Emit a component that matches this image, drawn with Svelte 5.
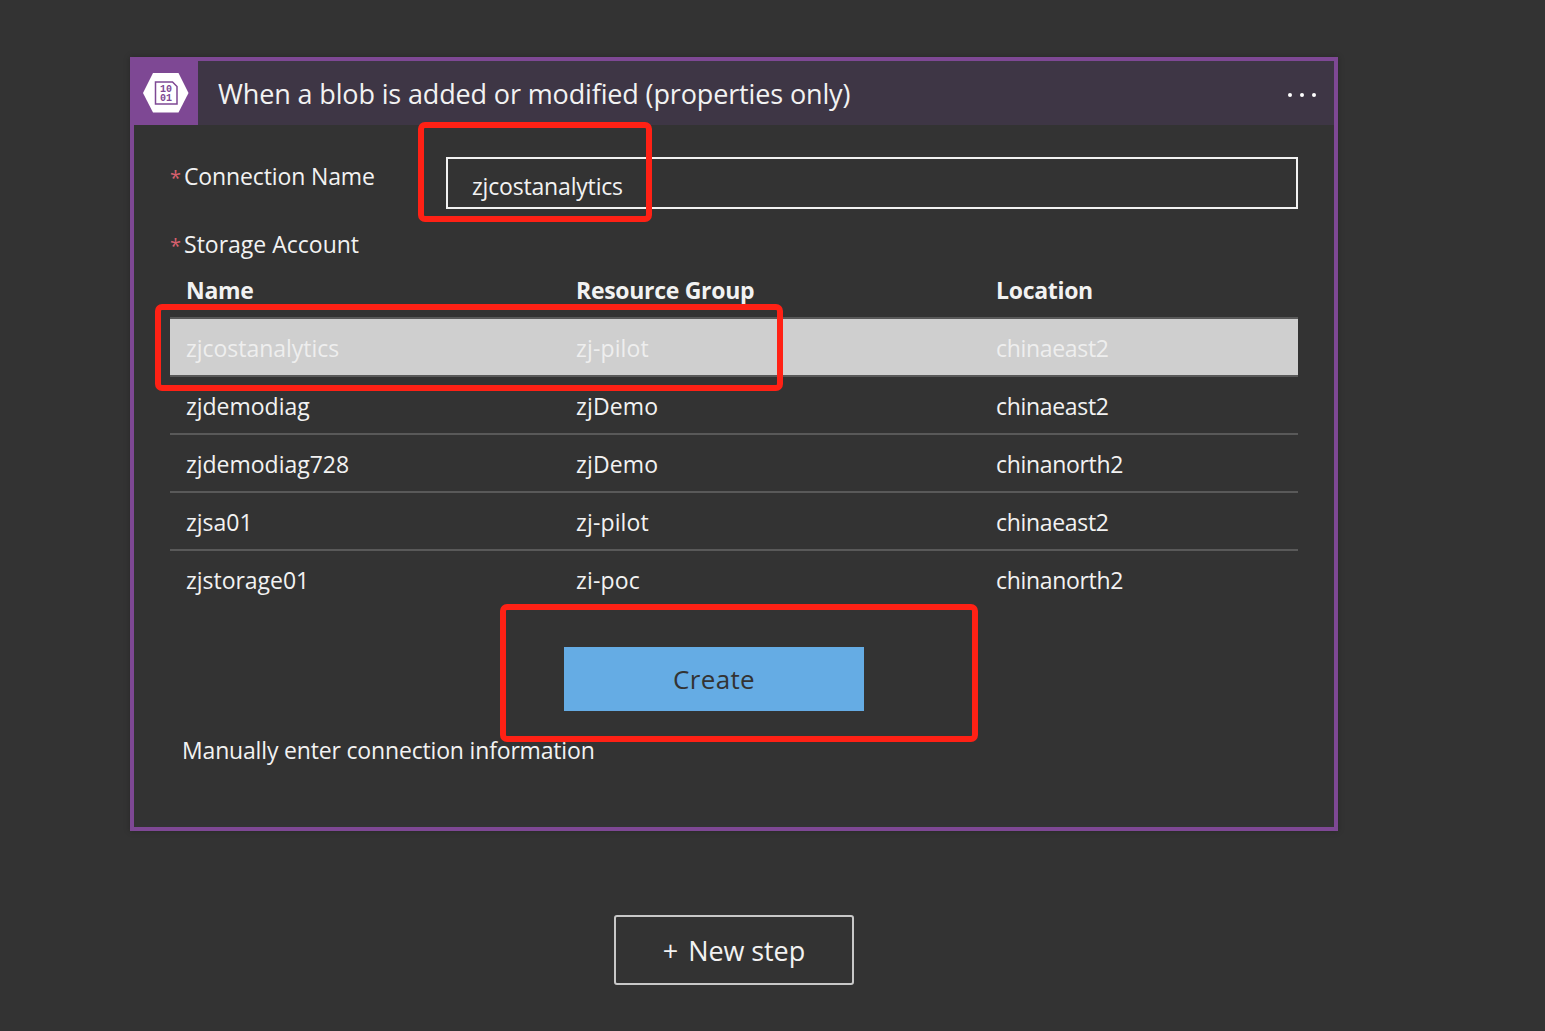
<script>
  const accounts = [
    { name: 'zjcostanalytics', group: 'zj-pilot', location: 'chinaeast2', selected: true },
    { name: 'zjdemodiag', group: 'zjDemo', location: 'chinaeast2' },
    { name: 'zjdemodiag728', group: 'zjDemo', location: 'chinanorth2' },
    { name: 'zjsa01', group: 'zj-pilot', location: 'chinaeast2' },
    { name: 'zjstorage01', group: 'zi-poc', location: 'chinanorth2' }
  ];
</script>

<div class="page">
  <div class="card">
    <div class="card-header">
      <div class="icon-box">
        <svg width="46" height="40" viewBox="0 0 46 40">
          <path d="M10 0h25.500L45.500 20 35.500 39.500H10L0 20z" fill="#fff" />
          <path d="M12.500 9h17l4.500 4.500V31H12.500z" fill="none" stroke="#7e4894" stroke-width="1.500" />
          <text x="23" y="19" class="bits">10</text>
          <text x="23" y="28" class="bits">01</text>
        </svg>
      </div>
      <div class="title">When a blob is added or modified (properties only)</div>
      <div class="dots"><span></span><span></span><span></span></div>
    </div>

    <div class="card-body">
      <div class="connection-row">
        <div class="label connection-label"><span class="star">*</span>Connection Name</div>
        <div class="input">zjcostanalytics</div>
      </div>

      <div class="label account-label"><span class="star">*</span>Storage Account</div>

      <div class="table">
        <div class="row head">
          <div>Name</div>
          <div>Resource Group</div>
          <div>Location</div>
        </div>
        {#each accounts as a}
          <div class="row" class:selected={a.selected}>
            <div class="col-name">{a.name}</div>
            <div class="col-group">{a.group}</div>
            <div class="col-location">{a.location}</div>
          </div>
        {/each}
      </div>

      <button class="create">Create</button>
      <div class="manual">Manually enter connection information</div>
    </div>
  </div>

  <button class="new-step"><span class="plus">+</span> New step</button>

  <!-- red annotations drawn over the screenshot -->
  <div class="mark mark-input"></div>
  <div class="mark mark-row"></div>
  <div class="mark mark-create"></div>
</div>

<style>
  :global(body) {
    margin: 0;
    background: #333333;
  }

  .page {
    position: relative;
    height: 1031px;
    overflow: hidden;
    padding: 57px 0 0 130px;
    box-sizing: border-box;
    font-family: "Open Sans", "Noto Sans", sans-serif;
    color: #f2f2f2;
  }

  .card {
    width: 1208px;
    height: 774px;
    box-sizing: border-box;
    border: 4px solid #7e4894;
    box-shadow: 0 0 6px rgba(0, 0, 0, 0.25);
  }

  .card-header {
    display: flex;
    align-items: center;
    height: 64px;
    background: #3e3645;
  }
  .icon-box {
    width: 64px;
    height: 64px;
    display: flex;
    align-items: center;
    justify-content: center;
    background: #7e4894;
  }
  .bits {
    font-family: "Liberation Mono", monospace;
    font-size: 10px;
    font-weight: 700;
    fill: #7e4894;
    text-anchor: middle;
  }
  .title {
    margin-left: 20px;
    font-size: 27px;
    letter-spacing: -0.140px;
    white-space: nowrap;
    flex: 1;
  }
  .dots {
    display: flex;
    gap: 8px;
    margin: 3px 18px 0 0;
  }
  .dots span {
    width: 4px;
    height: 4px;
    border-radius: 50%;
    background: #fff;
  }

  .card-body {
    padding: 32px 36px 0;
  }

  .label {
    font-size: 23px;
    line-height: 32px;
    letter-spacing: -0.120px;
  }
  .star {
    color: #d9606e;
    margin-right: 3px;
    font-size: 20px;
  }
  .connection-row {
    display: flex;
    gap: 70px;
  }
  .connection-label {
    width: 206px;
    padding-top: 3px;
  }
  .input {
    flex: 1;
    height: 52px;
    box-sizing: border-box;
    border: 2px solid #f2f2f2;
    padding: 11px 24px 0;
    font-size: 23px;
    line-height: 32px;
    letter-spacing: -0.180px;
  }
  .account-label {
    margin-top: 19px;
    letter-spacing: 0;
  }

  .table {
    margin-top: 15px;
    font-size: 23px;
  }
  .row {
    display: grid;
    grid-template-columns: 390px 420px 1fr;
    align-items: center;
    height: 58px;
    box-sizing: border-box;
    padding: 2px 0 0 16px;
    border-bottom: 2px solid #595959;
  }
  .row:last-child {
    border-bottom: none;
    padding-top: 0;
  }
  .row.head {
    height: 42px;
    padding-top: 0;
    font-weight: 700;
    align-items: start;
    line-height: 26px;
    letter-spacing: -0.300px;
  }
  .row.selected {
    background: #cfcfcf;
    color: #eeeeee;
  }
  .col-name {
    letter-spacing: -0.020px;
  }
  .col-group {
    letter-spacing: 0.150px;
  }
  .col-location {
    letter-spacing: -0.320px;
  }

  .create {
    display: block;
    width: 300px;
    height: 64px;
    margin: 38px 0 0 394px;
    border: none;
    padding: 0;
    background: #65ace4;
    color: #333333;
    font-family: inherit;
    font-size: 26px;
    letter-spacing: 0.350px;
  }
  .manual {
    margin: 23px 0 0 12px;
    font-size: 23px;
    line-height: 32px;
    letter-spacing: -0.170px;
  }

  .new-step {
    display: block;
    width: 240px;
    height: 70px;
    margin: 84px 0 0 484px;
    box-sizing: border-box;
    border: 2px solid #c8c8c8;
    border-radius: 3px;
    background: transparent;
    color: #f2f2f2;
    font-family: inherit;
    font-size: 27px;
    letter-spacing: -0.080px;
  }
  .plus {
    margin-right: 3px;
  }

  .mark {
    position: absolute;
    box-sizing: border-box;
    border: 6px solid #ff2115;
    border-radius: 7px;
  }
  .mark-input {
    left: 418px;
    top: 122px;
    width: 234px;
    height: 100px;
  }
  .mark-row {
    left: 155px;
    top: 304px;
    width: 628px;
    height: 87px;
  }
  .mark-create {
    left: 500px;
    top: 604px;
    width: 478px;
    height: 138px;
  }
</style>
